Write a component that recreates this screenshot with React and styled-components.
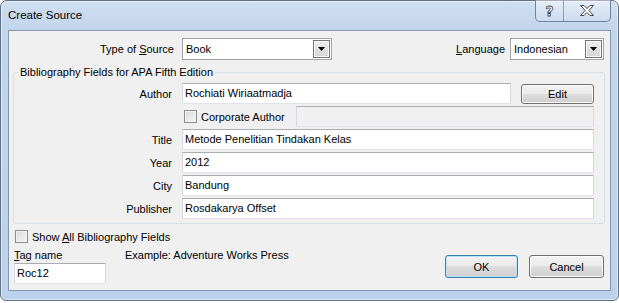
import React from "react";
import styled, { createGlobalStyle } from "styled-components";

const GlobalStyle = createGlobalStyle`
  html, body { margin: 0; padding: 0; background: #fff; }
  body {
    font-family: "Liberation Sans", Arial, sans-serif;
    font-size: 11px;
    color: #000;
  }
`;

const Window = styled.div`
  box-sizing: border-box;
  width: 619px;
  height: 301px;
  display: flex;
  flex-direction: column;
  padding: 0 7px 9px 7px;
  border: 1px solid #5f6f84;
  border-radius: 7px 7px 6px 6px;
  background: linear-gradient(180deg, #d0def0 0px, #c2d5ec 30px, #bcd1ea 100%);
  box-shadow: inset 0 0 0 1px rgba(255, 255, 255, 0.5);
`;

const TitleBar = styled.div`
  height: 29px;
  flex: none;
  display: flex;
  align-items: flex-start;
  justify-content: space-between;
`;

const Caption = styled.div`
  margin-top: 7px;
  font-size: 11.5px;
  line-height: 15px;
`;

const CaptionButtons = styled.div`
  display: flex;
  height: 21px;
  margin-top: -1px;
  border: 1px solid #71839c;
  border-top: none;
  border-radius: 0 0 5px 5px;
  overflow: hidden;
  background: linear-gradient(180deg, rgba(255,255,255,0.45), rgba(255,255,255,0.1));
`;

const CaptionButton = styled.div`
  width: ${(p) => p.$w}px;
  display: flex;
  align-items: center;
  justify-content: center;
  & + & { border-left: 1px solid #8d9db3; }
`;

const HelpGlyph = styled.span`
  font-family: "DejaVu Sans", sans-serif;
  font-weight: bold;
  font-size: 14px;
  line-height: 14px;
  color: #fbfbfb;
  -webkit-text-stroke: 0.8px #4a4a4a;
`;

const Client = styled.div`
  box-sizing: border-box;
  height: 261px;
  flex: none;
  display: flex;
  flex-direction: column;
  border: 1px solid #8597b0;
  background: #f0f0f0;
`;

const TopRow = styled.div`
  display: flex;
  align-items: center;
  height: 22px;
  margin-top: 7px;
  padding-right: 6px;
`;

const TopLabel = styled.div`
  width: ${(p) => p.$w || "auto"};
  flex: none;
  text-align: right;
  margin-right: ${(p) => p.$gap}px;
  margin-left: ${(p) => (p.$push ? "auto" : "0")};
`;

const Select = styled.div`
  box-sizing: border-box;
  width: ${(p) => p.$w}px;
  height: 22px;
  display: flex;
  padding: 1px;
  border: 1px solid #a3a3a3;
  background: #fff;
`;

const SelectValue = styled.div`
  flex: 1;
  padding-left: 2px;
  line-height: 18px;
`;

const SelectArrow = styled.div`
  box-sizing: border-box;
  width: 17px;
  display: flex;
  align-items: center;
  justify-content: center;
  border: 1px solid #767676;
  background: linear-gradient(180deg, #ececec, #d6d6d6);
  box-shadow: inset 0 0 0 1px #f6f6f6;
`;

const Group = styled.fieldset`
  margin: 5px 5px 0 4px;
  padding: 3px 10px 4px 0;
  border: 1px solid #d5dfe5;
  border-radius: 3px;
  min-width: 0;
  display: flex;
  flex-direction: column;
  gap: 2px;
`;

const Legend = styled.legend`
  margin-left: 4px;
  padding: 0 2px;
  line-height: 15px;
`;

const FieldRow = styled.div`
  display: flex;
  align-items: center;
  height: 21px;
`;

const FieldLabel = styled.div`
  box-sizing: border-box;
  width: 160px;
  flex: none;
  text-align: right;
  padding-right: 2px;
  margin-right: 8px;
`;

const TextBox = styled.div`
  box-sizing: border-box;
  height: 21px;
  flex: ${(p) => (p.$w ? "none" : "1")};
  width: ${(p) => (p.$w ? `${p.$w}px` : "auto")};
  margin-left: ${(p) => (p.$push ? "auto" : "0")};
  padding-left: 2px;
  line-height: 19px;
  border: 1px solid;
  border-color: #abadb3 #d5d8de #e0e4ea #d5d8de;
  background: ${(p) => (p.$disabled ? "#f0f0f0" : "#fff")};
  white-space: nowrap;
  overflow: hidden;
`;

const Button = styled.div`
  box-sizing: border-box;
  width: ${(p) => p.$w}px;
  height: ${(p) => p.$h}px;
  margin-left: ${(p) => p.$ml || 0}px;
  display: flex;
  align-items: center;
  justify-content: center;
  border: 1px solid ${(p) => (p.$default ? "#3c7fb1" : "#707070")};
  border-radius: 3px;
  background: linear-gradient(180deg, #f2f2f2 0%, #ebebeb 50%, #dddddd 50%, #cfcfcf 100%);
  box-shadow: inset 0 0 0 1px ${(p) => (p.$default ? "#b6e3f8" : "#fbfbfb")};
`;

const CheckLabel = styled.label`
  display: flex;
  align-items: center;
  gap: 4px;
  margin-left: ${(p) => p.$ml || 0}px;
`;

const CheckBox = styled.span`
  box-sizing: border-box;
  width: 13px;
  height: 13px;
  flex: none;
  border: 1px solid #8e8f8f;
  background: linear-gradient(135deg, #d9d9d9, #f7f7f7);
  box-shadow: inset 0 0 0 1px #f1f1f1;
`;

const BottomArea = styled.div`
  display: flex;
  align-items: flex-end;
  padding: 0 6px 0 5px;
`;

const BottomLeft = styled.div`
  display: flex;
  flex-direction: column;
`;

const CheckRow = styled.div`
  height: 15px;
  margin-top: 5px;
  display: flex;
  align-items: center;
`;

const TagRow = styled.div`
  height: 15px;
  margin-top: 3px;
  display: flex;
  align-items: center;
`;

const TagLabel = styled.div`
  width: 111px;
`;

const TagBox = styled(TextBox)`
  margin-top: 1px;
  flex: none;
`;

const Buttons = styled.div`
  display: flex;
  gap: 11px;
  margin-left: auto;
  margin-bottom: 6px;
`;

const Arrow = () => (
  <svg width="7" height="4" viewBox="0 0 7 4">
    <path d="M0 0h7L3.5 4z" fill="#000" />
  </svg>
);

const CloseGlyph = () => (
  <svg width="14" height="11" viewBox="0 0 14 11">
    <path
      d="M0.5 0.5h3.5l3 3 3-3h3.5l-4.6 5 4.6 5h-3.5l-3-3-3 3h-3.5l4.6-5z"
      fill="#fafafa"
      stroke="#474747"
      strokeWidth="1"
      strokeLinejoin="round"
    />
  </svg>
);

const fields = [
  ["Title", "Metode Penelitian Tindakan Kelas"],
  ["Year", "2012"],
  ["City", "Bandung"],
  ["Publisher", "Rosdakarya Offset"],
];

export default function App() {
  return (
    <>
      <GlobalStyle />
      <Window>
        <TitleBar>
          <Caption>Create Source</Caption>
          <CaptionButtons>
            <CaptionButton $w={27}>
              <HelpGlyph>?</HelpGlyph>
            </CaptionButton>
            <CaptionButton $w={46}>
              <CloseGlyph />
            </CaptionButton>
          </CaptionButtons>
        </TitleBar>
        <Client>
          <TopRow>
            <TopLabel $w="165px" $gap={8}>
              Type of <u>S</u>ource
            </TopLabel>
            <Select $w={150}>
              <SelectValue>Book</SelectValue>
              <SelectArrow>
                <Arrow />
              </SelectArrow>
            </Select>
            <TopLabel $gap={5} $push>
              <u>L</u>anguage
            </TopLabel>
            <Select $w={94}>
              <SelectValue>Indonesian</SelectValue>
              <SelectArrow>
                <Arrow />
              </SelectArrow>
            </Select>
          </TopRow>

          <Group>
            <Legend>Bibliography Fields for APA Fifth Edition</Legend>
            <FieldRow>
              <FieldLabel>Author</FieldLabel>
              <TextBox>Rochiati Wiriaatmadja</TextBox>
              <Button $w={73} $h={20} $ml={10}>Edit</Button>
            </FieldRow>
            <FieldRow>
              <FieldLabel />
              <CheckLabel $ml={2}>
                <CheckBox />
                Corporate Author
              </CheckLabel>
              <TextBox $w={298} $push $disabled />
            </FieldRow>
            {fields.map(([label, value]) => (
              <FieldRow key={label}>
                <FieldLabel>{label}</FieldLabel>
                <TextBox>{value}</TextBox>
              </FieldRow>
            ))}
          </Group>

          <BottomArea>
            <BottomLeft>
              <CheckRow>
                <CheckLabel $ml={1}>
                  <CheckBox />
                  <span>
                    Show <u>A</u>ll Bibliography Fields
                  </span>
                </CheckLabel>
              </CheckRow>
              <TagRow>
                <TagLabel>
                  <u>T</u>ag name
                </TagLabel>
                <span>Example: Adventure Works Press</span>
              </TagRow>
              <TagBox $w={92}>Roc12</TagBox>
            </BottomLeft>
            <Buttons>
              <Button $w={73} $h={23} $default>OK</Button>
              <Button $w={75} $h={23}>Cancel</Button>
            </Buttons>
          </BottomArea>
        </Client>
      </Window>
    </>
  );
}
